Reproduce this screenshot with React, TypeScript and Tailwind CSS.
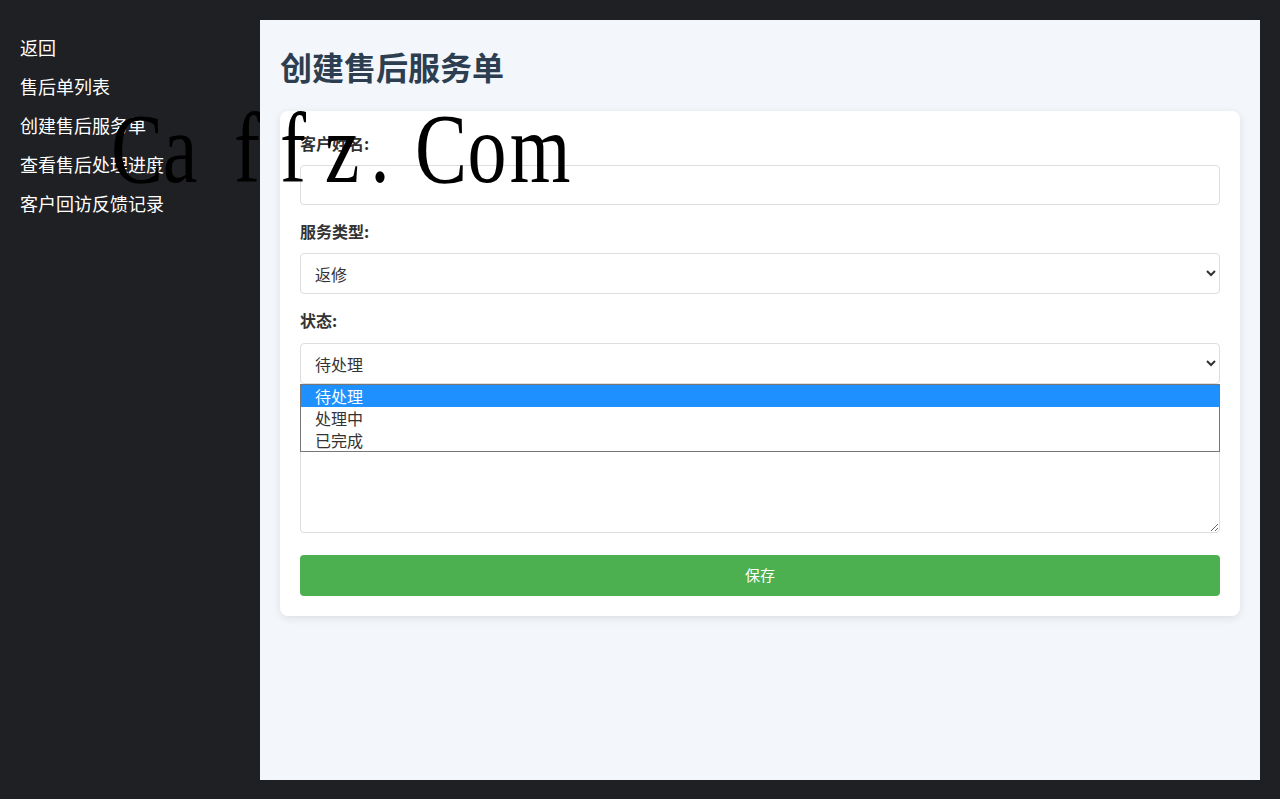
import { useState } from "react";

const navItems: string[] = ["返回", "售后单列表", "创建售后服务单", "查看售后处理进度", "客户回访反馈记录"];
const statusOptions: string[] = ["待处理", "处理中", "已完成"];

// watermark glyphs, centred on the x positions seen in the picture
const mark: { ch: string; cls: string }[] = [
  { ch: "C", cls: "left-[137px]" },
  { ch: "a", cls: "left-[180px]" },
  { ch: "f", cls: "left-[247px]" },
  { ch: "f", cls: "left-[293px]" },
  { ch: "z", cls: "left-[342px]" },
  { ch: ".", cls: "left-[380px]" },
  { ch: "C", cls: "left-[441px]" },
  { ch: "o", cls: "left-[487px]" },
  { ch: "m", cls: "left-[540px]" },
];

export default function App(): JSX.Element {
  const [name, setName] = useState<string>("");
  const [type, setType] = useState<string>("返修");
  const [status, setStatus] = useState<string>("待处理");
  const [desc, setDesc] = useState<string>("");

  return (
    <div
      className="relative flex min-h-[799px] w-full bg-[#1f2023]"
      style={{ fontFamily: '"Noto Sans CJK SC", "Noto Sans", sans-serif' }}
    >
      {/* sidebar */}
      <aside className="w-[260px] shrink-0 pl-5 pt-[28px]">
        {navItems.map((item) => (
          <a key={item} href="#" className="block h-[39px] text-[18px] leading-[39px] text-white">
            {item}
          </a>
        ))}
      </aside>

      {/* main */}
      <main className="mb-[19px] mr-5 mt-5 flex-1 bg-[#f3f6fb] px-5 pt-5">
        <h1 className="mb-[19px] h-[52px] text-[32px] font-bold leading-[52px] text-[#2c3e50]">创建售后服务单</h1>

        <div className="rounded-lg bg-white p-5 shadow-[0_2px_8px_rgba(0,0,0,0.1)]">
          <div className="mb-[14px]">
            <label className="mb-[10px] block h-6 text-base font-semibold leading-6 text-[#333]">客户姓名:</label>
            <input
              type="text"
              value={name}
              onChange={(e) => setName(e.target.value)}
              className="block h-[40px] w-full rounded border border-[#ddd] px-[10px] text-base text-[#333]"
            />
          </div>

          <div className="mb-[14px]">
            <label className="mb-[10px] block h-6 text-base font-semibold leading-6 text-[#333]">服务类型:</label>
            <select
              value={type}
              onChange={(e) => setType(e.target.value)}
              className="block h-[41px] w-full rounded border border-[#ddd] bg-white px-[10px] text-base text-[#333]"
            >
              <option>返修</option>
              <option>退货</option>
              <option>换货</option>
            </select>
          </div>

          <div className="relative mb-[15px]">
            <label className="mb-[11px] block h-6 text-base font-semibold leading-6 text-[#333]">状态:</label>
            <select
              value={status}
              onChange={(e) => setStatus(e.target.value)}
              className="block h-[41px] w-full rounded border border-[#ddd] bg-white px-[10px] text-base text-[#333]"
            >
              {statusOptions.map((s) => (
                <option key={s}>{s}</option>
              ))}
            </select>

            {/* opened option list */}
            <div className="absolute left-0 right-0 top-full z-10 border border-[#767676] bg-white">
              {statusOptions.map((s, i) => (
                <div
                  key={s}
                  className={`h-[22px] pl-[14px] text-base leading-[22px] ${
                    i === 0 ? "bg-[#1e90ff] text-white" : "text-[#333]"
                  }`}
                >
                  {s}
                </div>
              ))}
            </div>
          </div>

          <div className="mb-[22px]">
            <label className="mb-[10px] block h-6 text-base font-semibold leading-6 text-[#333]">问题描述:</label>
            <textarea
              value={desc}
              onChange={(e) => setDesc(e.target.value)}
              className="block h-[100px] w-full rounded border border-[#ddd] p-[10px] text-base text-[#333]"
            />
          </div>

          <button type="button" className="block h-[41px] w-full rounded bg-[#4caf50] text-[15px] text-white">
            保存
          </button>
        </div>
      </main>

      {/* watermark */}
      <div
        className="pointer-events-none absolute left-0 top-[99px] z-50 h-[100px] w-[600px] text-[100px] leading-[100px] text-black"
        style={{ fontFamily: '"Liberation Serif", serif' }}
      >
        {mark.map((m, i) => (
          <span key={i} className={`absolute top-0 ${m.cls} -translate-x-1/2`}>
            <span className="inline-block scale-x-[0.78]">{m.ch}</span>
          </span>
        ))}
      </div>
    </div>
  );
}
